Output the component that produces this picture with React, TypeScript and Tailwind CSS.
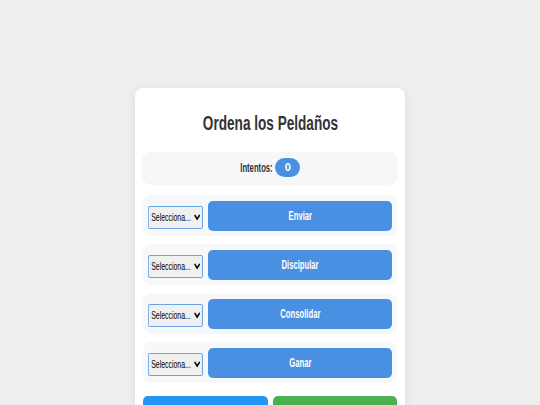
import { useState } from 'react'

const peldanos = ['Enviar', 'Discipular', 'Consolidar', 'Ganar']

// the reference text is a narrow grotesque; no narrow face is installed, so condense Liberation Sans
const font = "font-['Liberation_Sans',Arial,sans-serif]"

export default function App() {
  const [orden, setOrden] = useState<string[]>(peldanos.map(() => ''))
  const [intentos] = useState(0)

  return (
    <div className={`min-h-screen bg-[#eeeeee] flex justify-center ${font}`}>
      <div className="mt-[88px] w-[270px] self-start bg-white rounded-lg shadow-[0_2px_8px_rgba(0,0,0,0.08)] px-2 pt-[23px] pb-4">
        <h1 className="text-center text-[20px] leading-6 font-bold text-[#333]">
          <span className="inline-block whitespace-nowrap scale-x-[0.68]">Ordena los Peldaños</span>
        </h1>

        <div className="mt-[17px] h-[31px] flex items-center justify-center gap-[3px] bg-[#f6f7f9] rounded-lg shadow-[0_1px_3px_rgba(0,0,0,0.08)]">
          <span className="-ml-[18px] inline-block whitespace-nowrap origin-right scale-x-[0.64] text-[12px] font-bold text-[#333]">
            Intentos:
          </span>
          <span className="h-[19px] w-[25px] flex items-center justify-center rounded-full bg-[#4a90e2] text-white text-[11px] font-bold">
            {intentos}
          </span>
        </div>

        <div className="mt-[12px] flex flex-col gap-2">
          {peldanos.map((p, i) => (
            <div key={p} className="h-[41px] flex items-center gap-[5px] px-[5px] bg-[#f7f8fa] rounded-lg">
              <div className="w-[55px] h-[23px] shrink-0">
                <select
                  value={orden[i]}
                  onChange={e => setOrden(orden.map((o, j) => (j === i ? e.target.value : o)))}
                  className={`h-[23px] w-[87px] origin-left scale-x-[0.63] text-[11px] text-black bg-[#f0f0f0] border border-[#4a90e2] rounded-[2px] ${font}`}
                >
                  <option value="">Selecciona...</option>
                  {peldanos.map((_, n) => (
                    <option key={n} value={String(n + 1)}>{n + 1}</option>
                  ))}
                </select>
              </div>
              <button className="flex-1 h-[30px] rounded-[5px] bg-[#4a90e2] text-white text-[12px] font-bold">
                <span className="inline-block whitespace-nowrap scale-x-[0.64]">{p}</span>
              </button>
            </div>
          ))}
        </div>

        <div className="mt-[13px] flex gap-[5px]">
          <button className="flex-1 h-[40px] rounded-[5px] bg-[#2196f3] text-white text-[12px] font-bold">
            <span className="inline-block whitespace-nowrap scale-x-[0.64]">Comprobar</span>
          </button>
          <button className="flex-1 h-[40px] rounded-[5px] bg-[#4caf50] text-white text-[12px] font-bold">
            <span className="inline-block whitespace-nowrap scale-x-[0.64]">Reiniciar</span>
          </button>
        </div>
      </div>
    </div>
  )
}
